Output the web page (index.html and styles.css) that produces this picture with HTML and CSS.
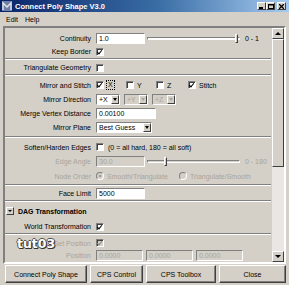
FILE: index.html
```html
<!DOCTYPE html>
<html lang="en">
<head>
    <meta charset="UTF-8">
    <title>Connect Poly Shape V3.0</title>
    <link rel="stylesheet" href="styles.css">
</head>
<body>
<div class="window">
    <!-- title bar -->
    <div class="titlebar">
        <svg class="title-icon" width="10" height="10" viewBox="0 0 10 10">
            <rect x="0" y="0" width="10" height="10" fill="#6b7fa8"/>
            <path d="M1 9V2l4 4 4-4v7" fill="none" stroke="#e6e6e6" stroke-width="1.4"/>
        </svg>
        <span class="title">Connect Poly Shape V3.0</span>
        <span class="tb-btn"><svg width="5" height="5" viewBox="0 0 5 5"><rect x="0" y="3" width="4" height="2" fill="#000"/></svg></span>
        <span class="tb-btn"><svg width="6" height="5" viewBox="0 0 6 5"><rect x="0.5" y="0.5" width="5" height="4" fill="none" stroke="#000"/><rect x="0" y="0" width="6" height="1.5" fill="#000"/></svg></span>
        <span class="tb-btn close"><svg width="5" height="5" viewBox="0 0 5 5"><path d="M0 0l5 5M5 0l-5 5" stroke="#000" stroke-width="1.3"/></svg></span>
    </div>

    <!-- menu -->
    <div class="menubar">
        <span>Edit</span>
        <span>Help</span>
    </div>

    <div class="frame">
        <div class="content">
            <div class="section top">
                <div class="row tight">
                    <label>Continuity</label>
                    <div class="ctrl">
                        <span class="field">1.0</span>
                        <span class="slider"><span class="groove"></span><span class="handle" style="left: 88px"></span></span>
                        <span class="range">0 - 1</span>
                    </div>
                </div>
                <div class="row tight">
                    <label>Keep Border</label>
                    <div class="ctrl"><span class="cb checked"></span></div>
                </div>
            </div>
            <div class="section top">
                <div class="row tight">
                    <label>Triangulate Geometry</label>
                    <div class="ctrl"><span class="cb"></span></div>
                </div>
            </div>
            <div class="section mirror">
                <div class="row">
                    <label>Mirror and Stitch</label>
                    <div class="ctrl">
                        <span class="opt"><span class="cb checked"></span><span class="focus">X</span></span>
                        <span class="opt"><span class="cb"></span>Y</span>
                        <span class="opt"><span class="cb"></span>Z</span>
                        <span class="opt stitch"><span class="cb checked"></span>Stitch</span>
                    </div>
                </div>
                <div class="row">
                    <label>Mirror Direction</label>
                    <div class="ctrl dds">
                        <span class="dd">+X<span class="arrow"></span></span>
                        <span class="dd disabled">+Y<span class="arrow"></span></span>
                        <span class="dd disabled">+Z<span class="arrow"></span></span>
                    </div>
                </div>
                <div class="row">
                    <label>Merge Vertex Distance</label>
                    <div class="ctrl"><span class="field wide">0.00100</span></div>
                </div>
                <div class="row">
                    <label>Mirror Plane</label>
                    <div class="ctrl"><span class="dd plane">Best Guess<span class="arrow"></span></span></div>
                </div>
            </div>
            <div class="section">
                <div class="row">
                    <label>Soften/Harden Edges</label>
                    <div class="ctrl"><span class="cb"></span><span class="note">(0 = all hard, 180 = all soft)</span></div>
                </div>
                <div class="row disabled">
                    <label>Edge Angle</label>
                    <div class="ctrl">
                        <span class="field off">30.0</span>
                        <span class="slider"><span class="groove"></span><span class="handle" style="left: 17px"></span></span>
                        <span class="range">0 - 180</span>
                    </div>
                </div>
                <div class="row disabled tall">
                    <label>Node Order</label>
                    <div class="ctrl">
                        <span class="radio-opt"><span class="radio on"></span>Smooth/Triangulate</span>
                        <span class="radio-opt"><span class="radio"></span>Triangulate/Smooth</span>
                    </div>
                </div>
            </div>
            <div class="section flat">
                <div class="row">
                    <label>Face Limit</label>
                    <div class="ctrl"><span class="field">5000</span></div>
                </div>
            </div>
            <div class="group-head">
                <span class="collapse"></span>
                <span>DAG Transformation</span>
            </div>
            <div class="section">
                <div class="row tight">
                    <label>World Transformation</label>
                    <div class="ctrl"><span class="cb checked"></span></div>
                </div>
            </div>
            <div class="section last">
                <div class="row short disabled">
                    <label>Set Position</label>
                    <div class="ctrl"><span class="cb checked off"></span></div>
                </div>
                <div class="row short disabled">
                    <label>Position</label>
                    <div class="ctrl pos">
                        <span class="field off">0.0000</span>
                        <span class="field off">0.0000</span>
                        <span class="field off">0.0000</span>
                    </div>
                </div>
            </div>
        </div>
        <div class="scrollbar">
            <span class="sb-btn up"></span>
            <span class="sb-thumb"></span>
            <span class="sb-track"></span>
            <span class="sb-btn down"></span>
        </div>
    </div>

    <div class="buttons">
        <button>Connect Poly Shape</button>
        <button>CPS Control</button>
        <button>CPS Toolbox</button>
        <button>Close</button>
    </div>

    <div class="watermark">tut03</div>
</div>
</body>
</html>
```

FILE: styles.css
```css
* { box-sizing: border-box; }
body { margin: 0; background: #d4d0c8; font-family: "Liberation Sans", Arial, sans-serif; font-size: 7px; color: #000; }
.window { position: relative; width: 289px; height: 285px; overflow: hidden; background: #d4d0c8; }

.titlebar { height: 12px; display: flex; align-items: center; padding: 0 3px 0 2px; background: linear-gradient(to right, #0a246a, #3a6ea5 55%, #a6caf0); color: #fff; font-weight: bold; font-size: 7.5px; }
.title-icon { margin-right: 3px; }
.title { flex: 1; }
.tb-btn { width: 9px; height: 8px; display: flex; align-items: center; justify-content: center; background: #d4d0c8; border: 1px solid; border-color: #fff #404040 #404040 #fff; }
.tb-btn.close { margin-left: 2px; }

.menubar { height: 14px; display: flex; align-items: center; gap: 7px; padding-left: 6px; }

.frame { display: flex; height: 238px; margin: 0 3px; border: 2px solid; border-color: #808080 #fff #fff #808080; }
.content { flex: 1; overflow: hidden; padding: 3px 1px 0 0; }
.section { padding: 2px 0 0; border-bottom: 1px solid #808080; box-shadow: 0 1px #fff; margin-bottom: 1px; }
.section.top { padding-top: 1px; }
.section.mirror { padding: 2px 0; }
.section.flat { padding-top: 0; }
.section.last { border-bottom: none; box-shadow: none; }
.row { display: grid; grid-template-columns: 86px 1fr; column-gap: 5px; align-items: center; height: 14px; }
.row.tight { height: 13px; }
.row.short { height: 12px; }
.row.tall { height: 16px; }
.row label { text-align: right; white-space: nowrap; }
.row.disabled { color: #a8a49c; }
.ctrl { display: flex; align-items: center; white-space: nowrap; }

.field { display: block; width: 49px; height: 11px; line-height: 9px; padding-left: 2px; background: #fff; border: 1px solid; border-color: #808080 #fff #fff #808080; }
.field.wide { width: 60px; }
.field.off { background: #d4d0c8; }

.slider { position: relative; width: 93px; height: 11px; margin-left: 2px; }
.groove { position: absolute; left: 0; right: 0; top: 4px; height: 3px; border: 1px solid; border-color: #808080 #fff #fff #808080; background: #fff; }
.disabled .groove { background: #d4d0c8; }
.handle { position: absolute; top: 1px; width: 3px; height: 9px; background: #d4d0c8; border: 1px solid; border-color: #fff #404040 #404040 #fff; }
.range { margin-left: 5px; }

.cb { position: relative; display: inline-block; width: 8px; height: 8px; background: #fff; border: 1px solid; border-color: #808080 #fff #fff #808080; box-shadow: inset 1px 1px #404040; flex: none; }
.cb.checked::after { content: ""; position: absolute; left: 1px; top: 0; width: 2px; height: 4px; border: solid #000; border-width: 0 1.5px 1.5px 0; transform: rotate(40deg); }
.cb.off { background: #d4d0c8; }
.cb.checked.off::after { border-color: #8a877f; }

.opt { display: flex; align-items: center; gap: 3px; width: 30px; }
.opt.stitch { width: auto; margin-left: 2px; }
.focus { padding: 0 1px; line-height: 8px; outline: 1px dotted #000; }

.dds { gap: 4px; }
.dd { display: flex; align-items: center; justify-content: space-between; width: 24px; height: 11px; padding-left: 2px; background: #fff; border: 1px solid; border-color: #808080 #fff #fff #808080; }
.dd.plane { width: 56px; }
.dd.disabled { background: #d4d0c8; color: #a8a49c; }
.arrow { position: relative; width: 8px; height: 9px; background: #d4d0c8; border: 1px solid; border-color: #fff #404040 #404040 #fff; }
.arrow::after { content: ""; position: absolute; left: 1px; top: 2px; border: 2px solid transparent; border-top: 3px solid #000; }
.dd.disabled .arrow::after { border-top-color: #a8a49c; }

.note { margin-left: 4px; }
.radio-opt { display: flex; align-items: center; gap: 3px; width: 83px; }
.radio { position: relative; width: 8px; height: 8px; border-radius: 50%; background: #d4d0c8; border: 1px solid; border-color: #808080 #fff #fff #808080; flex: none; }
.radio.on::after { content: ""; position: absolute; left: 2px; top: 2px; width: 2px; height: 2px; border-radius: 50%; background: #8a877f; }

.group-head { display: flex; align-items: center; gap: 4px; height: 16px; padding: 2px 0 0 1px; font-weight: bold; }
.collapse { position: relative; width: 8px; height: 8px; background: #d4d0c8; border: 1px solid; border-color: #fff #404040 #404040 #fff; }
.collapse::after { content: ""; position: absolute; left: 1px; top: 2px; border: 2px solid transparent; border-top: 2px solid #000; }

.pos { gap: 3px; }
.pos .field { width: 47px; }

.scrollbar { display: flex; flex-direction: column; width: 12px; background: #e9e7e3; }
.sb-btn { position: relative; height: 11px; background: #d4d0c8; border: 1px solid; border-color: #fff #404040 #404040 #fff; }
.sb-btn::after { content: ""; position: absolute; left: 2px; border: 3px solid transparent; }
.sb-btn.up::after { top: 0; border-bottom: 3px solid #000; }
.sb-btn.down::after { top: 3px; border-top: 3px solid #000; }
.sb-thumb { height: 128px; background: #d4d0c8; border: 1px solid; border-color: #fff #404040 #404040 #fff; }
.sb-track { flex: 1; }

.buttons { display: grid; grid-template-columns: 82px 53px 70px 67px; column-gap: 3px; margin: 1px 0 0 5px; }
.buttons button { height: 18px; padding: 0; font: inherit; color: #000; background: #d4d0c8; border: 1px solid; border-color: #fff #404040 #404040 #fff; box-shadow: inset -1px -1px #808080; }

.watermark { position: absolute; left: 17px; top: 236px; font-family: "DejaVu Sans", sans-serif; font-size: 12.5px; font-weight: bold; color: #fff; text-shadow: 1px 1px 0 #333, -1px 0 0 #555, 0 -1px 0 #555, 1px 0 0 #444, 0 1px 0 #444; }
```
